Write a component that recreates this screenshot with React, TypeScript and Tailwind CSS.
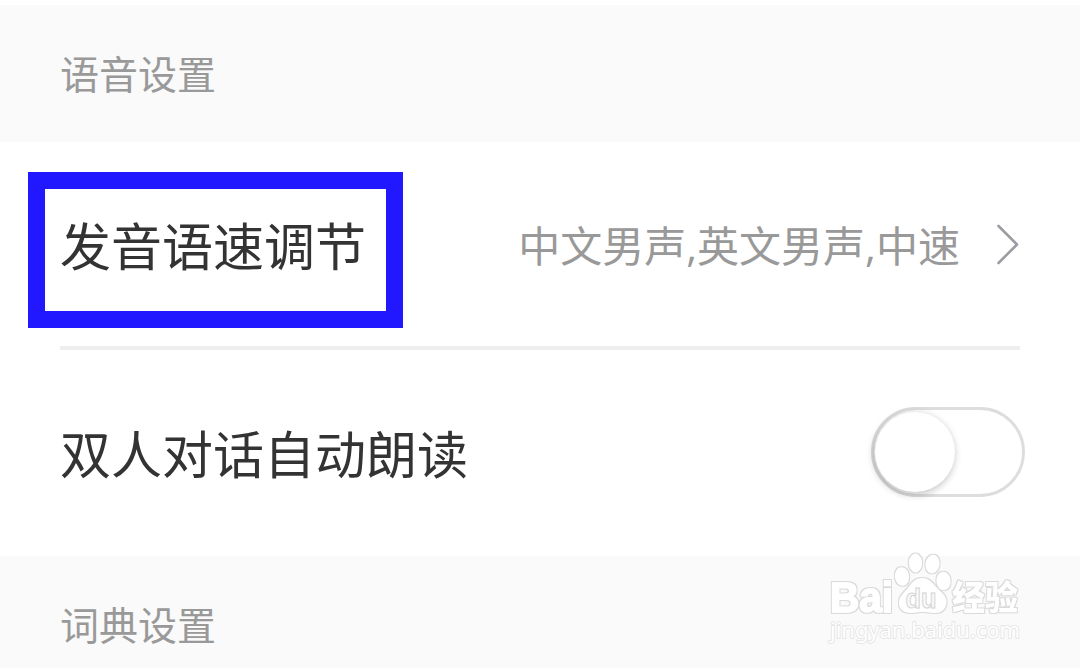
import React from 'react';

interface SectionTitleProps {
  title: string;
}

const SectionTitle: React.FC<SectionTitleProps> = ({ title }) => (
  <h2 className="text-[39px] leading-[56px] font-normal text-[#999999]">{title}</h2>
);

const Chevron: React.FC = () => (
  <svg className="ml-[34px] h-[44px] w-[26px]" viewBox="0 0 26 44" fill="none">
    <path d="M4.5 4L23 22.500L4.500 41" stroke="#9c9ca2" strokeWidth="2.6" strokeLinecap="round" strokeLinejoin="round" />
  </svg>
);

const Toggle: React.FC = () => (
  <button
    role="switch"
    aria-checked={false}
    className="mr-[-5px] mb-[2px] flex h-[90px] w-[154px] items-center rounded-full border-[3px] border-[#dddddd] bg-white"
  >
    <span className="ml-[1px] size-[80px] rounded-full bg-white shadow-[-1px_2px_7px_1px_rgba(0,0,0,0.22)]"></span>
  </button>
);

const Watermark: React.FC = () => (
  <svg
    className="absolute left-[820px] top-[545px] h-[110px] w-[210px]"
    viewBox="820 545 210 110"
    fill="#ffffff"
  >
    <defs>
      {/* Thin grey outline around everything in the group */}
      <filter id="outline" filterUnits="userSpaceOnUse" x="820" y="545" width="210" height="110" colorInterpolationFilters="sRGB">
        <feMorphology in="SourceAlpha" operator="dilate" radius="1" result="grown" />
        <feFlood floodColor="#dadada" />
        <feComposite in2="grown" operator="in" result="edge" />
        <feMerge>
          <feMergeNode in="edge" />
          <feMergeNode in="SourceGraphic" />
        </feMerge>
      </filter>
    </defs>
    <g stroke="#ffffff" strokeWidth="1" strokeLinejoin="round" filter="url(#outline)">
      <text x="830" y="612" fontSize="43" fontWeight="700" textLength="63" lengthAdjust="spacingAndGlyphs" strokeWidth="1.8" className="font-['Liberation_Sans']">
        Bai
      </text>
      {/* Paw */}
      <ellipse cx="902" cy="576.5" rx="6.6" ry="8.8" transform="rotate(-8 902 576.5)" />
      <ellipse cx="915.5" cy="563" rx="6.2" ry="9" />
      <ellipse cx="932.5" cy="564" rx="6.5" ry="8.8" transform="rotate(10 932.5 564)" />
      <ellipse cx="943.5" cy="581" rx="6.6" ry="8.8" transform="rotate(-5 943.5 581)" />
      <path d="M922 578.5C914 578.5 911 585 907 589.500C902 595 899 598 899.500 604C900 610 905 612.500 911 612.500C916 612.500 918 611.500 922 611.500C927 611.500 930 612.500 936 612.500C942 612.500 946 608 946 602C946 595 940 592 936 587.500C932 583 929 578.500 922 578.500Z" />
      <text x="952" y="609.5" fontSize="34" fontWeight="900" textLength="66" lengthAdjust="spacingAndGlyphs" strokeWidth="0" className="font-['Noto_Sans_CJK_SC']">
        经验
      </text>
    </g>
    <text x="830" y="638" fontSize="22" textLength="190" lengthAdjust="spacingAndGlyphs" stroke="#e2e2e2" strokeWidth="1.6" className="font-['Noto_Sans'] [paint-order:stroke]">
      jingyan.baidu.com
    </text>
    <text x="905.5" y="607.5" fontSize="27" fontWeight="700" textLength="31" lengthAdjust="spacingAndGlyphs" fill="#f8f8f8" stroke="#d4d4d4" strokeWidth="1" className="font-['Liberation_Sans']">
      du
    </text>
  </svg>
);

const App: React.FC = () => {
  return (
    <div className="relative flex h-[668px] w-[1080px] flex-col overflow-hidden bg-white font-['Noto_Sans_CJK_SC',sans-serif]">
      <header className="mt-[5px] flex h-[137px] items-center bg-[#fafafa] px-[60px] pb-[4px]">
        <SectionTitle title="语音设置" />
      </header>

      <main className="flex h-[414px] flex-col px-[60px]">
        <div className="flex h-[208px] items-center justify-between border-b-4 border-[#eeeeee]">
          <div className="relative">
            <span className="text-[51px] leading-[72px] text-[#333333]">发音语速调节</span>
            {/* Highlight frame around the label */}
            <div className="absolute left-[-32px] top-[-36px] h-[156px] w-[375px] border-[17px] border-[#2118ff]"></div>
          </div>
          <div className="flex items-center text-[42px] leading-[60px] text-[#999999]">
            <span className="whitespace-nowrap pt-[3px] font-['Open_Sans','Noto_Sans_CJK_SC',sans-serif]">中文男声,英文男声,中速</span>
            <Chevron />
          </div>
        </div>
        <div className="flex h-[206px] items-center justify-between">
          <span className="pb-[2px] text-[51px] leading-[72px] text-[#333333]">双人对话自动朗读</span>
          <Toggle />
        </div>
      </main>

      <footer className="h-[112px] bg-[#fafafa] px-[60px] pt-[39px]">
        <SectionTitle title="词典设置" />
      </footer>

      <Watermark />
    </div>
  );
};

export default App;
